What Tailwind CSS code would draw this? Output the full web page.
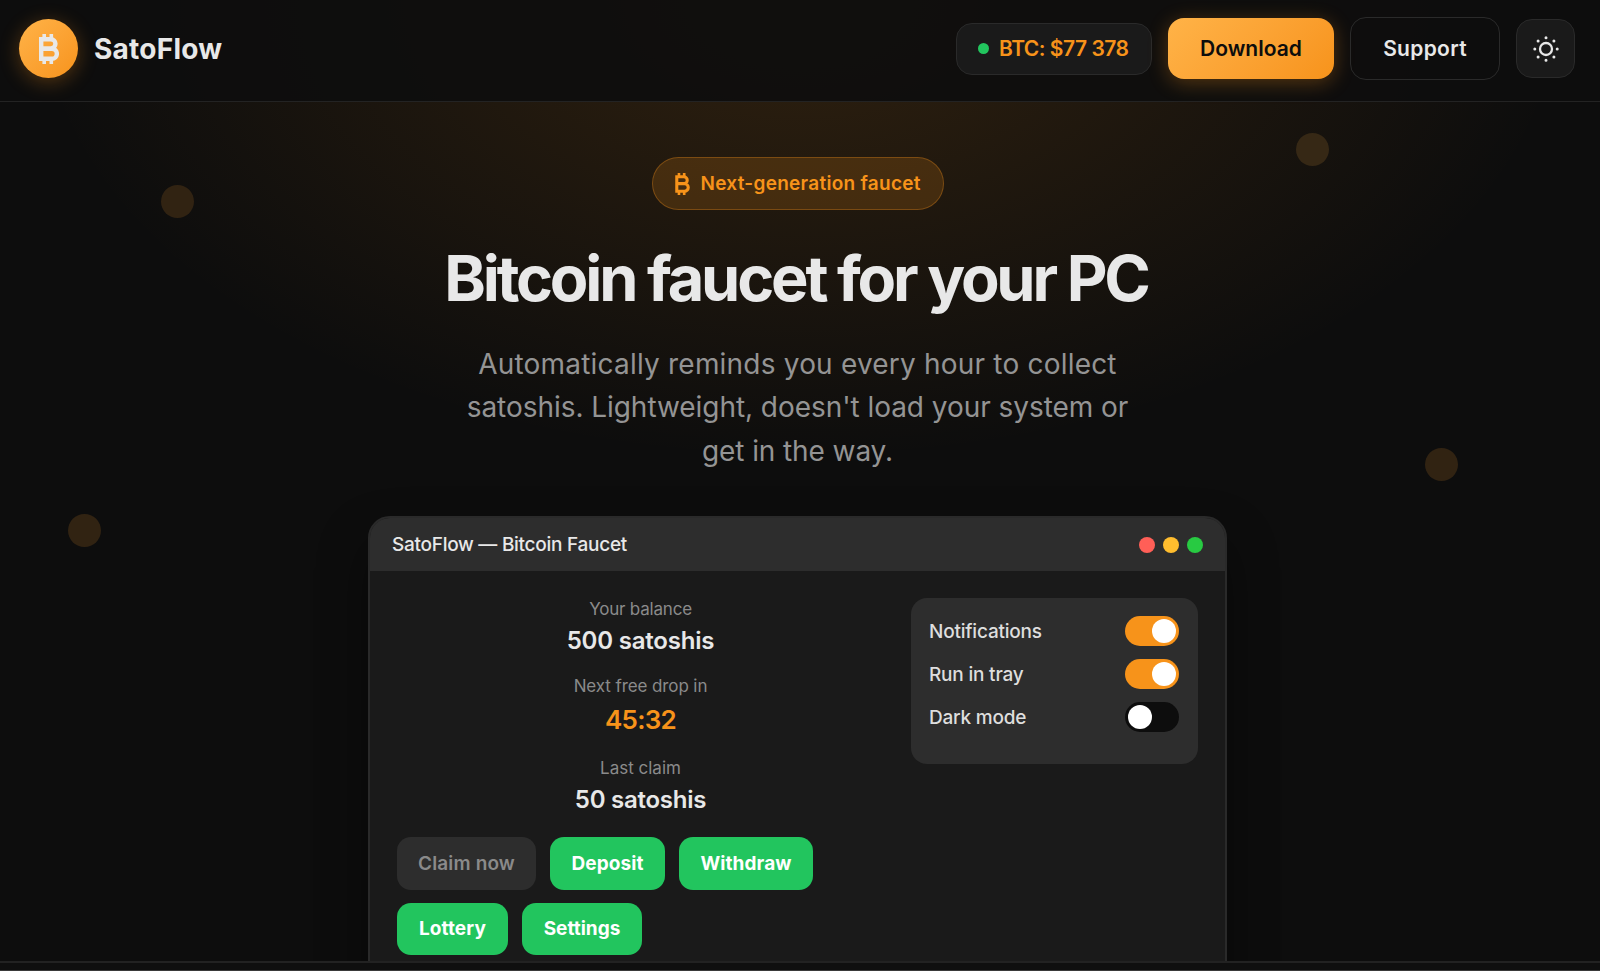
<!DOCTYPE html>
<html lang="en">
<head>
    <meta charset="UTF-8">
    <meta name="viewport" content="width=device-width, initial-scale=1.0">
    <title>SatoFlow | Bitcoin faucet for your PC</title>
    <script src="https://cdn.jsdelivr.net/npm/@tailwindcss/browser@4"></script>
</head>
<body class="relative h-screen overflow-hidden flex flex-col bg-[#0d0d0d] font-['Inter',sans-serif] text-[#e8e8e8] whitespace-nowrap">
    <!-- orange glow behind the hero -->
    <div class="absolute inset-x-0 top-0 h-[460px] bg-[radial-gradient(ellipse_48%_100%_at_50%_0%,#f7931a26,transparent)]"></div>

    <!-- floating coins -->
    <div class="absolute left-[161px] top-[185px] size-[33px] rounded-full bg-[#312312]"></div>
    <div class="absolute left-[1296px] top-[133px] size-[33px] rounded-full bg-[#362815]"></div>
    <div class="absolute left-[1425px] top-[448px] size-[33px] rounded-full bg-[#312312]"></div>
    <div class="absolute left-[68px] top-[514px] size-[33px] rounded-full bg-[#312312]"></div>

    <header class="relative z-10 h-[102px] shrink-0 flex items-center justify-between pl-[19px] pr-[25px] pb-1 bg-[#0d0d0d]/90 border-b border-[#232323]">
      <div class="flex items-center gap-4">
        <div class="size-[59px] rounded-full bg-linear-135 from-[#ffb347] to-[#f7931a] shadow-[0_4px_20px_#f7931a4d] flex items-center justify-center">
          <svg class="w-[20px] h-[30px]" viewBox="0 0 20 30" fill="none" stroke="currentColor">
            <path d="M5.2 0V5M12.3 0V5M5.2 25V30M12.3 25V30" stroke-width="3.6"/>
            <path d="M2.2 5.2H11.8a4.6 4.6 0 0 1 0 9.3H2.2ZM2.2 14.7H12.8a5 5 0 0 1 0 10.1H2.2Z" stroke-width="4.4"/>
          </svg>
        </div>
        <span class="pt-px text-[28px] font-bold tracking-[0.25px]">SatoFlow</span>
      </div>
      <div class="flex items-center gap-4">
        <div class="w-[196px] h-[52px] rounded-2xl border border-[#2a2a2a] bg-[#1a1a1a] flex items-center pl-[21px] gap-[10px]">
          <span class="size-[11px] rounded-full bg-[#22c55e]"></span>
          <span class="text-[21px] font-semibold tracking-[-0.5px] text-[#f7931a]">BTC: $77 378</span>
        </div>
        <button class="w-[166px] h-[61px] rounded-2xl bg-linear-135 from-[#ffb347] to-[#f7931a] shadow-[0_4px_20px_#f7931a4d] text-[#0d0d0d] text-[21px] font-semibold">Download</button>
        <button class="w-[150px] h-[63px] rounded-2xl border border-[#2a2a2a] text-[21px] font-semibold tracking-[0.3px]">Support</button>
        <button class="size-[59px] rounded-2xl border border-[#2a2a2a] bg-[#1a1a1a] flex items-center justify-center">
          <svg class="size-[26px]" viewBox="0 0 26 26" fill="none" stroke="currentColor" stroke-width="2.3">
            <circle cx="13" cy="13" r="6"/>
            <path d="M13 1.8h.01M13 24.2h.01M1.8 13h.01M24.2 13h.01M5.1 5.1h.01M20.9 5.1h.01M5.1 20.9h.01M20.9 20.9h.01" stroke-width="3" stroke-linecap="round"/>
          </svg>
        </button>
      </div>
    </header>

    <main class="relative h-[859px] shrink-0 overflow-hidden flex flex-col items-center pt-[55px] pr-[5px]">
      <div class="w-[292px] h-[53px] shrink-0 rounded-full border border-[#f7931a4d] bg-[#f7931a2b] flex items-center pl-[22px] gap-[11px] text-[#f7931a]">
        <svg class="w-[15px] h-[22px]" viewBox="0 0 20 30" fill="none" stroke="currentColor">
          <path d="M5.2 0V5M12.3 0V5M5.2 25V30M12.3 25V30" stroke-width="3.6"/>
          <path d="M2.2 5.2H11.8a4.6 4.6 0 0 1 0 9.3H2.2ZM2.2 14.7H12.8a5 5 0 0 1 0 10.1H2.2Z" stroke-width="4.2"/>
        </svg>
        <span class="pt-0.5 text-[19px] font-semibold tracking-[0.28px]">Next-generation faucet</span>
      </div>
      <h1 class="mt-8 -ml-[3px] text-[63px] leading-[72px] font-bold tracking-[-3.17px]">Bitcoin faucet for your PC</h1>
      <p class="mt-[29px] text-center text-[28px] leading-[43.4px] text-[#949494]">
        <span class="tracking-[0.2px]">Automatically reminds you every hour to collect</span><br>
        <span class="tracking-[-0.05px]">satoshis. Lightweight, doesn't load your system or</span><br>
        <span class="tracking-[-0.1px]">get in the way.</span>
      </p>

      <!-- app window -->
      <div class="mt-[43px] w-[859px] h-[500px] shrink-0 rounded-[22px] border-2 border-[#2a2a2a] bg-[#1a1a1a] shadow-[0_25px_50px_#00000066] overflow-hidden">
        <div class="h-[53px] flex items-center justify-between px-[22px] bg-[#2d2d2d]">
          <span class="pt-px text-[19px] font-medium tracking-[-0.27px]">SatoFlow — Bitcoin Faucet</span>
          <div class="flex gap-2">
            <span class="size-4 rounded-full bg-[#ff5f57]"></span>
            <span class="size-4 rounded-full bg-[#ffbd2e]"></span>
            <span class="size-4 rounded-full bg-[#28ca42]"></span>
          </div>
        </div>
        <div class="flex items-start gap-[27px] px-[27px] pt-[26px]">
          <div class="w-[487px] text-center">
            <div class="text-[17px] leading-6 tracking-[-0.2px] text-[#8a8a8a]">Your balance</div>
            <div class="text-[24px] leading-[40px] font-semibold tracking-[-0.2px]">500 satoshis</div>
            <div class="mt-[13px] text-[17px] leading-6 tracking-[-0.1px] text-[#8a8a8a]">Next free drop in</div>
            <div class="text-[26px] leading-[44px] font-semibold tracking-[-0.7px] text-[#f7931a]">45:32</div>
            <div class="mt-[14px] text-[17px] leading-6 text-[#8a8a8a]">Last claim</div>
            <div class="text-[24px] leading-[40px] font-semibold tracking-[-0.25px]">50 satoshis</div>
            <div class="mt-[17px] flex flex-wrap gap-x-[14px] gap-y-[13px] text-[19px] font-semibold text-white">
              <button class="w-[139px] h-[52.5px] pt-px rounded-[14px] bg-[#2d2d2d] text-[#8a8a8a] tracking-[0.15px]">Claim now</button>
              <button class="w-[115px] h-[52.5px] pt-px rounded-[14px] bg-[#22c55e] font-bold tracking-[0.1px]">Deposit</button>
              <button class="w-[134px] h-[52.5px] pt-px rounded-[14px] bg-[#22c55e] font-bold tracking-[0.1px]">Withdraw</button>
              <button class="w-[111px] h-[52.5px] pt-px rounded-[14px] bg-[#22c55e] font-bold tracking-[0.1px]">Lottery</button>
              <button class="w-[120px] h-[52.5px] pt-px rounded-[14px] bg-[#22c55e] font-bold">Settings</button>
            </div>
          </div>
          <div class="mt-px w-[287px] h-[166px] rounded-2xl bg-[#2d2d2d] pl-[18px] pr-[19px] pt-[18px] flex flex-col gap-[13px] text-[19px] leading-[31px] font-medium tracking-[-0.2px] text-[#dedede]">
            <div class="h-[30px] flex justify-between">Notifications
              <span class="w-[54px] h-[30px] p-[3px] rounded-full bg-[#f7931a] flex justify-end"><span class="size-6 rounded-full bg-white"></span></span>
            </div>
            <div class="h-[30px] flex justify-between">Run in tray
              <span class="w-[54px] h-[30px] p-[3px] rounded-full bg-[#f7931a] flex justify-end"><span class="size-6 rounded-full bg-white"></span></span>
            </div>
            <div class="h-[30px] flex justify-between">Dark mode
              <span class="w-[54px] h-[30px] p-[3px] rounded-full bg-[#0d0d0d] flex"><span class="size-6 rounded-full bg-white"></span></span>
            </div>
          </div>
        </div>
      </div>
    </main>
    <footer class="relative h-[10px] shrink-0 bg-[#0f0f0f] border-t-2 border-b border-t-[#222222] border-b-[#3a3a3a]"></footer>
</body>
</html>
